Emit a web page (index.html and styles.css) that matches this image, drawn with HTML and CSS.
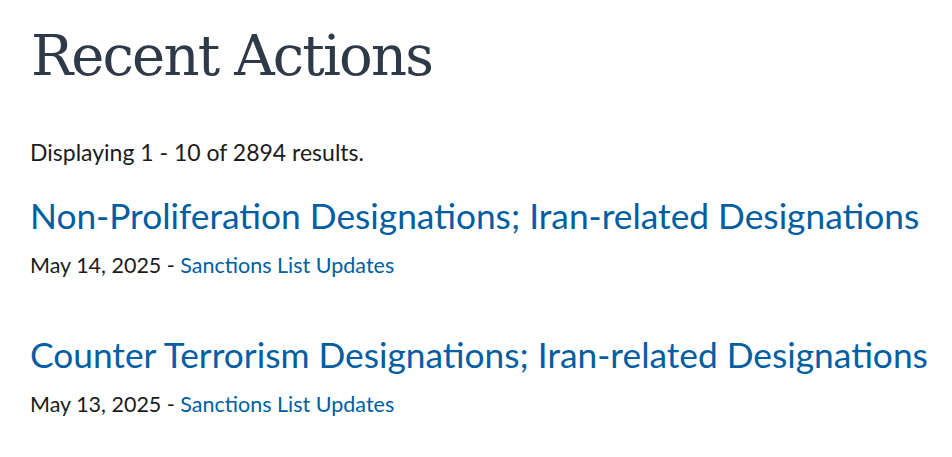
FILE: index.html
```html
<!DOCTYPE html>
<html>
<head>
<meta charset="utf-8">
<link rel="stylesheet" href="styles.css">
</head>
<body>
<main class="page">
  <h1 class="title">Recent Actions</h1>
  <p class="count">Displaying 1 - 10 of 2894 results.</p>
  <div class="results">
    <article class="result">
      <a class="result-title" href="#">Non-Proliferation Designations; Iran-related Designations</a>
      <div class="meta">May 14, 2025 - <a class="meta-link" href="#">Sanctions List Updates</a></div>
    </article>
    <article class="result">
      <a class="result-title" href="#">Counter Terrorism Designations; Iran-related Designations</a>
      <div class="meta">May 13, 2025 - <a class="meta-link" href="#">Sanctions List Updates</a></div>
    </article>
  </div>
</main>
</body>
</html>
```

FILE: styles.css
```css
html, body {
  margin: 0;
  padding: 0;
  background: #ffffff;
}
.page {
  padding: 16px 0 0 30px;
  font-family: Lato, "Open Sans", sans-serif;
  color: #1b1b1b;
  white-space: nowrap;
}
.title {
  margin: 0 0 0 1px;
  font-family: "DejaVu Serif", serif;
  font-weight: 300;
  font-size: 56px;
  line-height: 80px;
  color: #2f3a48;
  letter-spacing: -1.85px;
}
.count {
  margin: 41px 0 0 0;
  font-size: 23px;
  line-height: 30px;
}
.results {
  display: flex;
  flex-direction: column;
  gap: 53px;
  margin-top: 27px;
}
.result {
  display: flex;
  flex-direction: column;
  gap: 12px;
}
.result-title {
  font-size: 35.3px;
  line-height: 44px;
  color: #005ea2;
  text-decoration: none;
}
.meta {
  font-size: 21.5px;
  line-height: 30px;
}
.meta-link {
  color: #005ea2;
  text-decoration: none;
}
```
